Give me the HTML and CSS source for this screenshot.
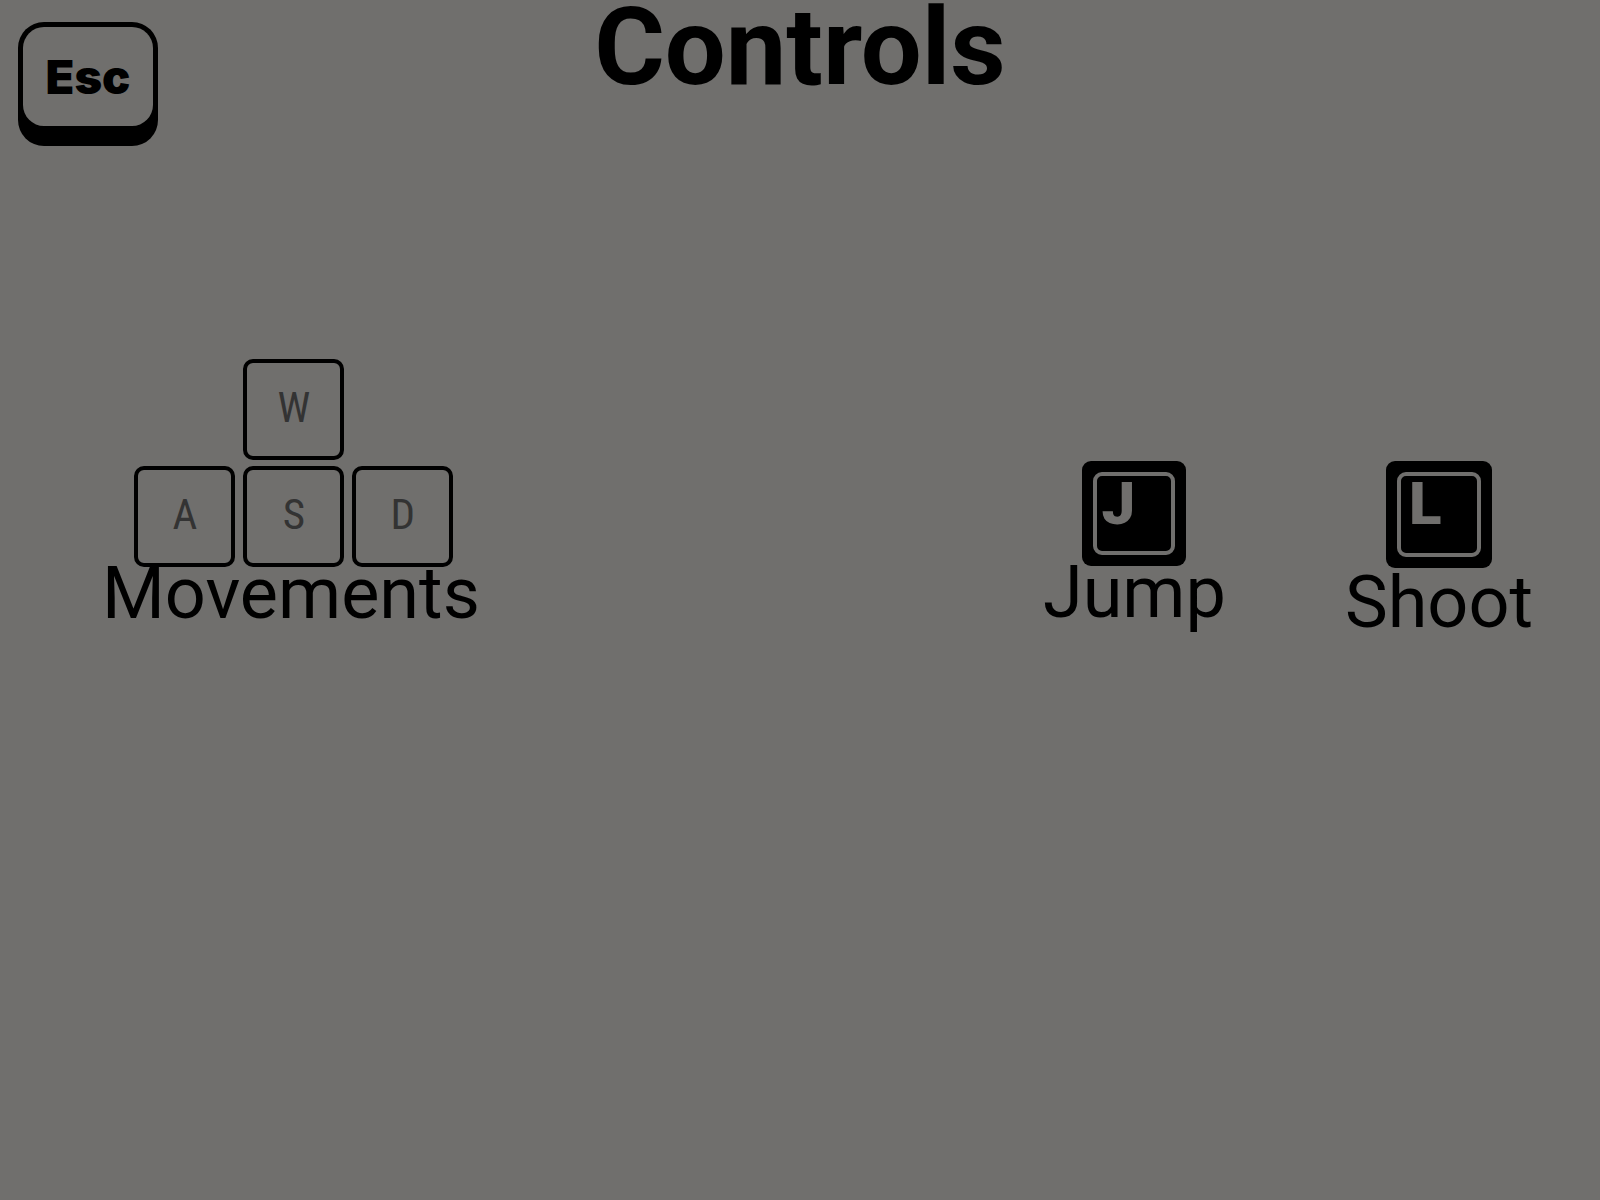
FILE: index.html
```html
<!DOCTYPE html>
<html lang="en">
<head>
<meta charset="utf-8">
<title>Controls</title>
<meta name="viewport" content="width=device-width, initial-scale=1">
<link rel="stylesheet" href="styles.css">
</head>
<body>
<header class="header">
  <button class="esc" type="button"><span class="esc-face">Esc</span></button>
  <h1 class="title">Controls</h1>
</header>
<main class="controls">
  <section class="control">
    <div class="wasd">
      <kbd class="key key-up">W</kbd>
      <kbd class="key key-left">A</kbd>
      <kbd class="key">S</kbd>
      <kbd class="key">D</kbd>
    </div>
    <p class="label">Movements</p>
  </section>
  <div class="actions">
    <section class="control">
      <kbd class="cap"><span class="cap-face">J</span></kbd>
      <p class="label">Jump</p>
    </section>
    <section class="control control-shoot">
      <kbd class="cap cap-large"><span class="cap-face">L</span></kbd>
      <p class="label">Shoot</p>
    </section>
  </div>
</main>
</body>
</html>
```
FILE: styles.css
```css
* {
  box-sizing: border-box;
}

body {
  margin: 0;
  min-height: 100vh;
  background: #706f6d;
  color: #000;
  font-family: Roboto, "Liberation Sans", sans-serif;
}

.header {
  display: grid;
  grid-template-columns: 1fr auto 1fr;
  align-items: start;
  padding: 0 18px;
}

.esc {
  justify-self: start;
  display: flex;
  width: 140px;
  height: 124px;
  margin: 22px 0 0;
  padding: 5px 5px 20px;
  border: 0;
  border-radius: 26px;
  background: #000;
  color: #000;
  cursor: pointer;
}

.esc-face {
  flex: 1;
  align-self: stretch;
  display: flex;
  align-items: center;
  justify-content: center;
  border-radius: 21px;
  background: #706f6d;
  font: 900 47px/1 Inter, "Liberation Sans", sans-serif;
}

.title {
  margin: 0;
  font-size: 108px;
  font-weight: 700;
  line-height: 94px;
}

.controls {
  display: flex;
  justify-content: space-between;
  align-items: flex-start;
  padding: 213px 67px 0 102px;
}

.control {
  display: flex;
  flex-direction: column;
  align-items: center;
}

.wasd {
  display: grid;
  grid-template-columns: repeat(3, 101px);
  grid-auto-rows: 101px;
  gap: 6px 8px;
  padding-left: 6px;
}

.key {
  display: flex;
  align-items: center;
  justify-content: center;
  padding-bottom: 4px;
  border: 4px solid #000;
  border-radius: 10px;
  color: #333;
  font: 400 43px/1 "Roboto Condensed", "Liberation Sans Narrow", Roboto, sans-serif;
}

.key-up {
  grid-column: 2;
}

.key-left {
  grid-column: 1;
}

.actions {
  display: flex;
  align-items: flex-start;
  gap: 119px;
  margin-top: 102px;
}

.control-shoot {
  gap: 8px;
}

.cap {
  display: flex;
  width: 104px;
  height: 105px;
  padding: 11px;
  border-radius: 9px;
  background: #000;
  color: #706f6d;
}

.cap-large {
  width: 106px;
  height: 107px;
}

.cap-face {
  flex: 1;
  padding: 0 4px;
  border: 4px solid #706f6d;
  border-radius: 9px;
  font: 900 60px/56px Roboto, "Liberation Sans", sans-serif;
}

.cap-large .cap-face {
  padding: 0 8px;
}

.label {
  margin: 0;
  font-size: 72px;
  line-height: 54px;
}
```
